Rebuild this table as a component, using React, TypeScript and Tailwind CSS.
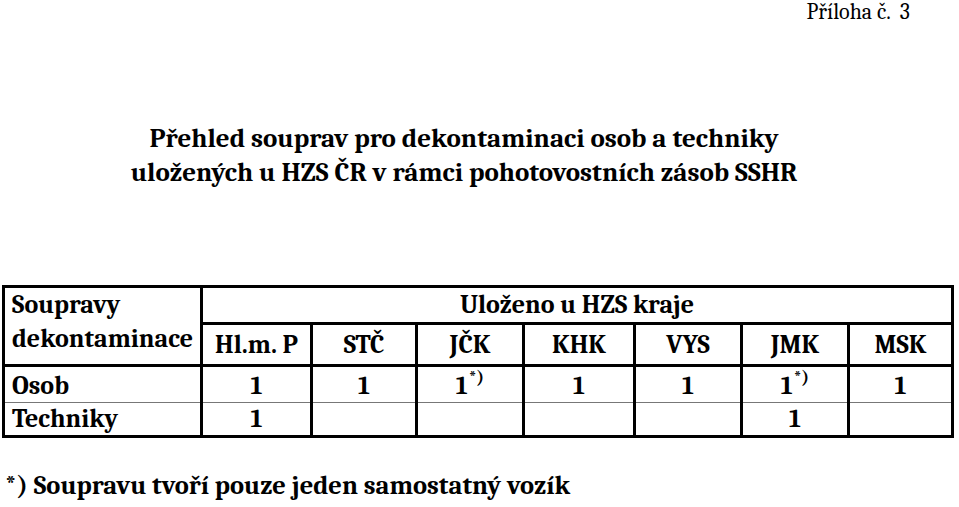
import React from "react";

const regions = ["Hl.m. P", "STČ", "JČK", "KHK", "VYS", "JMK", "MSK"];

const osob: { v: string; note?: boolean }[] = [
  { v: "1" },
  { v: "1" },
  { v: "1", note: true },
  { v: "1" },
  { v: "1" },
  { v: "1", note: true },
  { v: "1" },
];

const techniky = ["1", "", "", "", "", "1", ""];

const colWidths = ["w-[198px]", "w-[110px]", "w-[105px]", "w-[107px]", "w-[111px]", "w-[107px]", "w-[107px]", "w-[104px]"];

export default function App() {
  return (
    <div className="w-[959px] h-[507px] bg-white text-black overflow-hidden font-serif">
      <div className="flex justify-end pr-[49px]">
        <p className="text-[22px] leading-[24px] whitespace-pre">Příloha č.  3</p>
      </div>

      <h1 className="mt-[98px] pr-[31px] text-center text-[27px] leading-[34px] font-bold">
        Přehled souprav pro dekontaminaci osob a techniky
        <br />
        uložených u HZS ČR v rámci pohotovostních zásob SSHR
      </h1>

      <table className="mt-[95px] ml-[2px] w-[952px] table-fixed border-collapse border-[3px] border-black text-[26px] font-bold">
        <colgroup>
          {colWidths.map((w, i) => (
            <col key={i} className={w} />
          ))}
        </colgroup>
        <tbody>
          <tr className="h-[37px]">
            <td rowSpan={2} className="border-[3px] border-black align-top pl-[7px] leading-[34px] pt-0 whitespace-nowrap">
              Soupravy
              <br />
              dekontaminace
            </td>
            <td colSpan={7} className="border-[3px] border-black text-center align-middle leading-[32px]">
              Uloženo u HZS kraje
            </td>
          </tr>
          <tr className="h-[42px]">
            {regions.map((r) => (
              <td key={r} className="border-[3px] border-black text-center align-middle leading-[32px] whitespace-nowrap">
                {r}
              </td>
            ))}
          </tr>
          <tr className="h-[36px]">
            <td className="border-x-[3px] border-t-[3px] border-b border-x-black border-t-black border-b-[#777] pl-[7px] leading-[32px] pt-[3px]">
              Osob
            </td>
            {osob.map((c, i) => (
              <td
                key={i}
                className="border-x-[3px] border-t-[3px] border-b border-x-black border-t-black border-b-[#777] text-center leading-[32px] pt-[3px]"
              >
                {c.v}
                {c.note && <sup className="text-[18px] -top-[11px] ml-[1px]">*)</sup>}
              </td>
            ))}
          </tr>
          <tr className="h-[34px]">
            <td className="border-x-[3px] border-b-[3px] border-t border-x-black border-b-black border-t-[#777] pl-[7px] leading-[32px]">
              Techniky
            </td>
            {techniky.map((v, i) => (
              <td key={i} className="border-x-[3px] border-b-[3px] border-t border-x-black border-b-black border-t-[#777] text-center leading-[32px]">
                {v}
              </td>
            ))}
          </tr>
        </tbody>
      </table>

      <p className="mt-[31px] pl-[5px] text-[26.5px] leading-[34px] font-bold">
        *) Soupravu tvoří pouze jeden samostatný vozík
      </p>
    </div>
  );
}
